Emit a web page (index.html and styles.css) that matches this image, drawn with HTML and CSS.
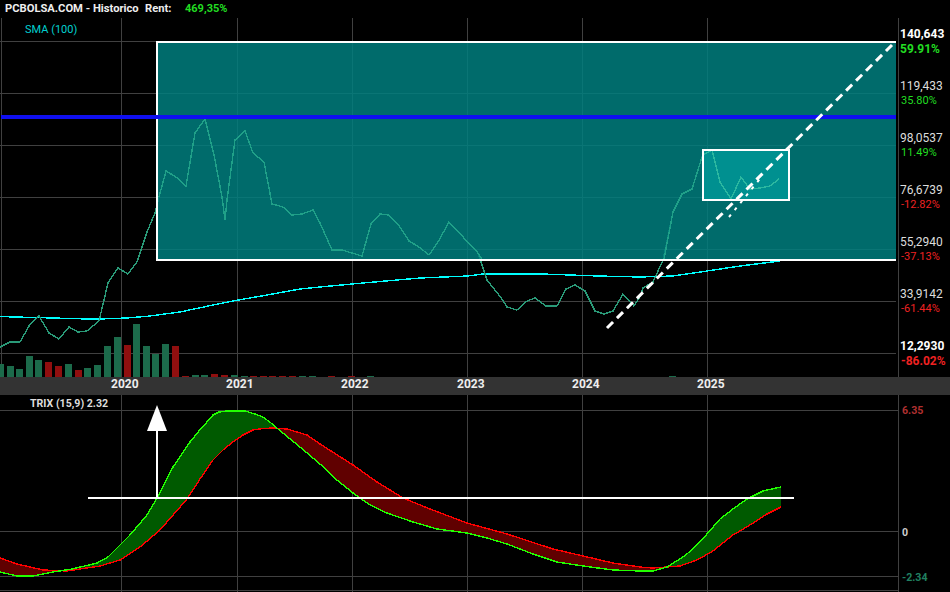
FILE: index.html
```html
<!DOCTYPE html>
<html lang="es">
<head>
<meta charset="utf-8">
<title>PCBOLSA.COM - Historico</title>
<link rel="stylesheet" href="styles.css">
</head>
<body>
<svg class="chart" width="950" height="592" viewBox="0 0 950 592" xmlns="http://www.w3.org/2000/svg">
  <rect class="bg" x="0" y="0" width="950" height="592"/>
  <g class="grid">
    <path d="M1.5 18V377M121.5 18V377M237.5 18V377M352.5 18V377M467.5 18V377M582.5 18V377M707.5 18V377"/>
    <path d="M0 41.5H896M0 93.5H896M0 145.5H896M0 197.5H896M0 249.5H896M0 301.5H896M0 353.5H896"/>
    <path d="M121.5 395V592M237.5 395V592M352.5 395V592M467.5 395V592M582.5 395V592M707.5 395V592"/>
    <path d="M0 410.5H898M0 531.5H898M0 576.5H898M0 590.5H898"/>
    <path d="M898.5 18V377M898.5 395V592"/>
  </g>

  <g class="vol-green">
    <rect x="0" y="364" width="4" height="13"/><rect x="7" y="366" width="7" height="11"/><rect x="16" y="369" width="7" height="8"/><rect x="26" y="356" width="7" height="21"/><rect x="35" y="360" width="7" height="17"/><rect x="65" y="364" width="7" height="13"/><rect x="84" y="368" width="7" height="9"/><rect x="94" y="365" width="7" height="12"/><rect x="104" y="346" width="7" height="31"/><rect x="114" y="337" width="7" height="40"/><rect x="133" y="324" width="7" height="53"/><rect x="143" y="346" width="7" height="31"/><rect x="152" y="354" width="7" height="23"/><rect x="162" y="344" width="7" height="33"/><rect x="192" y="375" width="7" height="2"/><rect x="201" y="375" width="7" height="2"/><rect x="231" y="375" width="7" height="2"/><rect x="241" y="376" width="7" height="1"/><rect x="299" y="376" width="7" height="1"/><rect x="309" y="376" width="7" height="1"/><rect x="367" y="376" width="7" height="1"/><rect x="669" y="376" width="7" height="1"/>
  </g>
  <g class="vol-red">
    <rect x="45" y="362" width="7" height="15"/><rect x="55" y="366" width="7" height="11"/><rect x="75" y="370" width="7" height="7"/><rect x="124" y="345" width="7" height="32"/><rect x="172" y="346" width="7" height="31"/><rect x="182" y="376" width="7" height="1"/><rect x="211" y="374" width="7" height="3"/><rect x="221" y="375" width="7" height="2"/><rect x="250" y="376" width="7" height="1"/><rect x="260" y="376" width="7" height="1"/><rect x="269" y="376" width="7" height="1"/><rect x="279" y="376" width="7" height="1"/><rect x="289" y="376" width="7" height="1"/><rect x="328" y="376" width="7" height="1"/><rect x="348" y="376" width="7" height="1"/>
  </g>

  <polyline class="sma" points="0,316.5 15,317 53,318 88,319 100,319 127,318 150,316 180,312 213,305 233,301 267,295 300,289 320,287 363,283 420,278 468,276 483,274 542,274 598,276 640,277 673,276 707,271 740,266 780,261"/>
  <polyline class="price" points="0,347 10,342 20,342 29,326 39,316 49,333 59,339 69,327 78,332 87,331 99,321 108,283 118,268 128,274 137,262 147,232 155,213 159,197 166,171 176,177 186,186 195,133 205,119 214,155 222,197 225,220 227,200 235,140 245,131 253,153 264,162 272,204 283,207 292,215 302,214 313,210 320,223 332,250 342,250 362,256 371,224 380,214 389,215 400,227 409,241 419,247 429,255 438,242 449,222 478,253 487,280 502,299 507,307 517,310 527,301 535,298 546,306 557,306 566,289 575,285 585,291 595,311 604,314 613,311 623,294 634,306 640,297 643,288 653,282 663,260 673,212 682,194 692,189 702,157 712,150 720,182 731,200 741,177 750,189 760,188 770,186 779,179"/>

  <rect class="zone" x="157" y="42" width="739" height="218"/>
  <path class="zone-edge" d="M896 42H157V260H896"/>
  <rect class="zone-inner" x="703.5" y="150.5" width="85" height="49"/>
  <polyline class="price-on-zone" points="159,197 166,171 176,177 186,186 195,133 205,119 214,155 222,197 225,220 227,200 235,140 245,131 253,153 264,162 272,204 283,207 292,215 302,214 313,210 320,223 332,250 342,250 362,256 371,224 380,214 389,215 400,227 409,241 419,247 429,255 438,242 449,222 478,253 482,259"/>
  <polyline class="price-on-zone" points="664,259 673,212 682,194 692,189 702,157"/>
  <polyline class="price-on-box" points="703,155 712,150 720,182 731,199 741,177 750,189 760,188 770,186 779,179"/>
  <path class="box-edge" d="M703 150H789V200H703Z"/>

  <path class="blue" d="M1 117H896"/>
  <path class="dash" d="M607 328L892 45"/>
  <path class="dash-dots" d="M729 217L763 175"/>

  <rect class="band" x="0" y="377" width="950" height="18"/>

  <polygon class="fill-red" points="0,572 17,576 33,576 53,572 72,569 100,566 67,571 43,570 17,564 0,558"/>
  <polygon class="fill-green" points="72,569 97,563 108,557 130,535 147,515 157,498 173,467 190,442 199,431 207,422 213,415 219,412 227,411 245,411 255,414 263,417 271,423 278,429 273,428 263,428.5 253,430 243,435 233,442 223,450 213,460 200,479 187,499 160,530 140,547 120,560 100,566"/>
  <polygon class="fill-red" points="278,429 300,447 320,464 337,480 353,493 370,505 387,513 413,522 437,529 467,533 487,538 507,544 533,554 557,562 583,566 613,570 640,571 653,571 667,567 652,568 640,567 613,563 583,556 553,549 507,534 467,523 430,509 403,498 377,482 353,465 320,444 307,435 287,429"/>
  <polygon class="fill-green" points="667,567 683,557 693,549 707,534 720,519 733,509 747,499 763,491 781,487 781,507 767,514 750,525 733,535 713,551 697,560 680,566"/>
  <polyline class="trix-red" points="0,558 17,564 43,570 67,571 100,566 120,560 140,547 160,530 187,499 200,479 213,460 223,450 233,442 243,435 253,430 263,428.5 273,428 287,429 307,435 320,444 353,465 377,482 403,498 430,509 467,523 507,534 553,549 583,556 613,563 640,567 652,568 667,567 680,566 697,560 713,551 733,535 750,525 767,514 781,507"/>
  <polyline class="trix-green" points="0,572 17,576 33,576 53,572 72,569 97,563 108,557 130,535 147,515 157,498 173,467 190,442 199,431 207,422 213,415 219,412 227,411 245,411 255,414 263,417 271,423 278,429 300,447 320,464 337,480 353,493 370,505 387,513 413,522 437,529 467,533 487,538 507,544 533,554 557,562 583,566 613,570 640,571 653,571 667,567 683,557 693,549 707,534 720,519 733,509 747,499 763,491 781,487"/>

  <path class="hline" d="M88 498H794"/>
  <path class="arrow-shaft" d="M157 498V431"/>
  <polygon class="arrow-head" points="157,405 167,431 147,431"/>

  <text class="title" x="5" y="12">PCBOLSA.COM - Historico</text>
  <text class="title" x="145" y="12">Rent:</text>
  <text class="rent" x="185" y="12">469,35%</text>
  <text class="sma-label" x="25" y="33">SMA (100)</text>

  <text class="axis-strong" x="900" y="38">140,643</text>
  <text class="pct-strong up" x="900" y="53">59.91%</text>
  <text class="axis" x="900" y="90">119,433</text>
  <text class="pct up" x="901" y="104">35.80%</text>
  <text class="axis" x="900" y="142">98,0537</text>
  <text class="pct up" x="901" y="156">11.49%</text>
  <text class="axis" x="900" y="194">76,6739</text>
  <text class="pct down" x="901" y="208">-12.82%</text>
  <text class="axis" x="900" y="246">55,2940</text>
  <text class="pct down" x="901" y="260">-37.13%</text>
  <text class="axis" x="900" y="298">33,9142</text>
  <text class="pct down" x="901" y="312">-61.44%</text>
  <text class="axis-strong" x="900" y="350">12,2930</text>
  <text class="pct-strong down" x="901" y="365">-86.02%</text>

  <text class="year" x="111" y="388">2020</text>
  <text class="year" x="226" y="388">2021</text>
  <text class="year" x="341" y="388">2022</text>
  <text class="year" x="457" y="388">2023</text>
  <text class="year" x="572" y="388">2024</text>
  <text class="year" x="697" y="388">2025</text>

  <text class="trix-label" x="30" y="407">TRIX (15,9) 2.32</text>
  <text class="trix-max" x="902" y="414">6.35</text>
  <text class="trix-zero" x="902" y="536">0</text>
  <text class="trix-min" x="902" y="581">-2.34</text>
</svg>
</body>
</html>
```
FILE: styles.css
```css
html, body {
  margin: 0;
  padding: 0;
  background: #000;
  overflow: hidden;
}
.chart {
  display: block;
  font-family: Roboto, "Liberation Sans", sans-serif;
}
.bg { fill: #000; }
.grid path {
  fill: none;
  stroke: #404040;
  stroke-width: 1;
  shape-rendering: crispEdges;
}
.vol-green rect { fill: #1c6b4b; }
.vol-red rect { fill: #900f0f; }
.sma {
  fill: none;
  stroke: #00ffff;
  stroke-width: 1.4;
  shape-rendering: crispEdges;
}
.price {
  fill: none;
  stroke: #2a9a78;
  stroke-width: 1.4;
  shape-rendering: crispEdges;
}
.price-on-zone {
  fill: none;
  stroke: #20a088;
  stroke-width: 1.4;
  shape-rendering: crispEdges;
}
.price-on-box {
  fill: none;
  stroke: #2cb8a0;
  stroke-width: 1.4;
  shape-rendering: crispEdges;
}
.zone {
  fill: #008080;
  opacity: 0.84;
}
.zone-edge, .box-edge {
  fill: none;
  stroke: #fff;
  stroke-width: 2;
  shape-rendering: crispEdges;
}
.zone-inner {
  fill: #009595;
  opacity: 0.9;
}
.blue {
  fill: none;
  stroke: #1010f0;
  stroke-width: 4;
  shape-rendering: crispEdges;
}
.dash {
  fill: none;
  stroke: #fff;
  stroke-width: 3;
  stroke-dasharray: 8.5 5.54;
}
.dash-dots {
  fill: none;
  stroke: #fff;
  stroke-width: 2;
  stroke-dasharray: 3 6;
}
.band {
  fill: #333;
}
.fill-green { fill: #005a00; }
.fill-red { fill: #600000; }
.trix-red, .trix-green {
  fill: none;
  stroke-width: 1.4;
  shape-rendering: crispEdges;
}
.trix-red { stroke: #ff0000; }
.trix-green { stroke: #22ff00; }
.hline, .arrow-shaft {
  fill: none;
  stroke: #fff;
  stroke-width: 2;
  shape-rendering: crispEdges;
}
.arrow-head { fill: #fff; }
.title {
  fill: #eee;
  font-size: 11.2px;
  font-weight: 700;
}
.rent {
  fill: #22dd22;
  font-size: 11px;
  font-weight: 700;
}
.sma-label {
  fill: #00d0d0;
  font-size: 11px;
}
.axis {
  fill: #ddd;
  font-size: 12px;
}
.axis-strong {
  fill: #fff;
  font-size: 12px;
  font-weight: 700;
}
.pct { font-size: 11px; }
.pct-strong {
  font-size: 12px;
  font-weight: 700;
}
.up { fill: #22dd22; }
.down { fill: #ee2222; }
.year {
  fill: #eee;
  font-size: 12px;
  font-weight: 700;
}
.trix-label {
  fill: #ddd;
  font-size: 10.6px;
  font-weight: 700;
}
.trix-max {
  fill: #b03030;
  font-size: 10.6px;
  font-weight: 700;
}
.trix-zero {
  fill: #ccc;
  font-size: 10.6px;
  font-weight: 700;
}
.trix-min {
  fill: #208060;
  font-size: 10.6px;
  font-weight: 700;
}
```
